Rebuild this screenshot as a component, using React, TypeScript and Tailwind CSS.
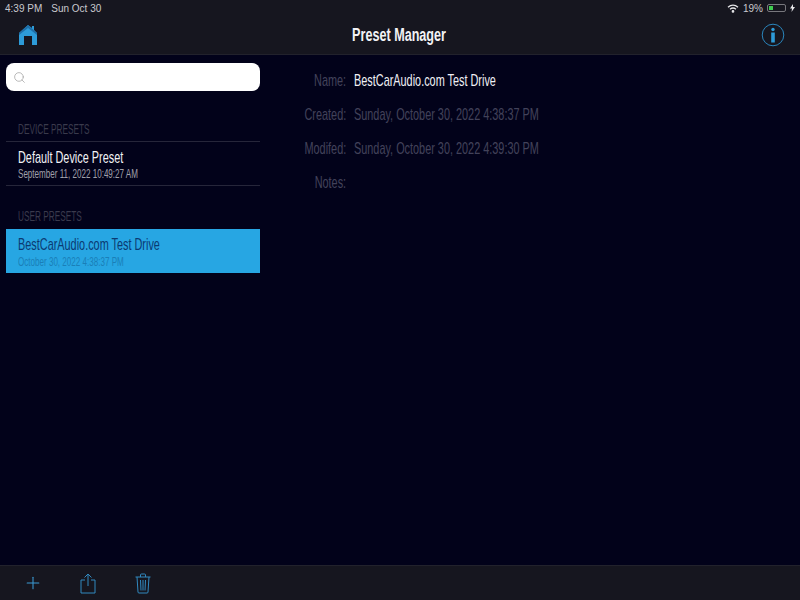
import React from 'react'
import { Search, Plus } from 'lucide-react'

const base = "font-['Liberation_Sans',sans-serif] inline-block whitespace-nowrap origin-left"
const condensed = `${base} scale-x-[0.64]`
const condensedSmall = `${base} scale-x-[0.62]`
const sectionLabel = `${base} scale-x-[0.59] text-[14px] text-[#3a3a4c]`

const HomeIcon = () => (
  <svg width="20" height="22" viewBox="0 0 20 22">
    <path d="M10 1 L14 4 L14 2 L16 2 L16 6 L19 9 L19 21 L14 21 L14 12 L6 12 L6 21 L1 21 L1 9 Z" fill="#2d9bd8" />
    <path d="M10 1 L1 9 L1 11 L10 4 L19 11 L19 9 Z" fill="#1f6fa8" />
  </svg>
)

const InfoIcon = () => (
  <svg width="24" height="24" viewBox="0 0 24 24" fill="none">
    <circle cx="12" cy="12" r="10.8" stroke="#2a86bd" strokeWidth="1" />
    <circle cx="12" cy="6.5" r="1.7" fill="#2d9bd8" />
    <rect x="10.2" y="9.5" width="3.6" height="10" fill="#2d9bd8" />
  </svg>
)

const ShareIcon = () => (
  <svg width="16" height="21" viewBox="0 0 16 21" fill="none" stroke="#3089c0" strokeWidth="1">
    <path d="M5 7 H1 V20 H15 V7 H11" />
    <path d="M8 13 V1 M4.5 4.5 L8 1 L11.5 4.5" />
  </svg>
)

const TrashIcon = () => (
  <svg width="16" height="21" viewBox="0 0 16 21" fill="none" stroke="#3089c0" strokeWidth="1">
    <path d="M0.5 4 H15.5 M5.5 4 V2 Q5.5 1 6.5 1 H9.5 Q10.5 1 10.5 2 V4" />
    <path d="M2 4 L3 19 Q3 20 4 20 H12 Q13 20 13 19 L14 4" />
    <path d="M5.5 7 L6 17.5 M8 7 V17.5 M10.5 7 L10 17.5" />
  </svg>
)

const DetailRow = ({ label, value, bright }: { label: string; value: string; bright?: boolean }) => (
  <div className="flex h-[34px] items-center">
    <div className="w-[66px] text-right">
      <span className={`${condensed} origin-right text-[17px] text-[#42425a]`}>{label}</span>
    </div>
    <div className="ml-2">
      <span className={`${condensed} text-[17px] ${bright ? 'text-[#f0f0f5]' : 'text-[#42425a]'}`}>{value}</span>
    </div>
  </div>
)

export default function App() {
  return (
    <div className="flex h-[600px] w-[800px] flex-col overflow-hidden bg-[#02021a] font-['Liberation_Sans',sans-serif]">
      {/* Status bar + nav */}
      <div className="h-[55px] shrink-0 border-b border-[#22222c] bg-[#16161f]">
        <div className="flex h-[16px] items-center justify-between pl-[5px] pr-[5px] text-[10px] text-[#c9c9ce]">
          <div className="flex gap-[9px]">
            <span>4:39 PM</span>
            <span>Sun Oct 30</span>
          </div>
          <div className="flex items-center gap-[4px]">
            <svg width="12" height="9" viewBox="0 0 12 9" fill="none" stroke="#e5e5e8" strokeWidth="1.3">
              <path d="M1 3.2 C4 .5 8 .5 11 3.2" />
              <path d="M3 5.2 C5 3.6 7 3.6 9 5.2" />
              <circle cx="6" cy="7.4" r="0.7" fill="#e5e5e8" />
            </svg>
            <span>19%</span>
            <div className="flex h-[8px] w-[19px] items-stretch rounded-[2px] border border-[#77777d] p-[1px]">
              <div className="w-[4px] bg-[#3ecb4f]" />
            </div>
            <svg width="5" height="8" viewBox="0 0 5 8">
              <path d="M3 0 L0 4.5 H2 L1.5 8 L5 3 H3 Z" fill="#e5e5e8" />
            </svg>
          </div>
        </div>
        <div className="flex h-[38px] items-center justify-between pl-[18px] pr-[15px]">
          <HomeIcon />
          <span className="inline-block origin-center scale-x-[0.7] whitespace-nowrap text-[18px] font-bold text-[#f2f2f5]">
            Preset Manager
          </span>
          <InfoIcon />
        </div>
      </div>

      {/* Body */}
      <div className="flex min-h-0 flex-1">
        <div className="w-[266px] shrink-0 pl-[6px] pr-[6px] pt-2">
          <div className="flex h-[28px] items-center rounded-lg bg-white pl-[7px]">
            <Search size={13} strokeWidth={1.25} className="text-[#9a9a9a]" />
          </div>
          <div className="flex h-[50px] items-end pb-[1px] pl-3">
            <span className={sectionLabel}>DEVICE PRESETS</span>
          </div>
          <div className="flex h-[45px] flex-col justify-center border-y border-[#26263a] pl-3 pt-[2px]">
            <span className={`${condensed} text-[17px] leading-[18px] text-[#f2f2f5]`}>Default Device Preset</span>
            <span className={`${condensedSmall} text-[13px] leading-[14px] text-[#a0a0aa]`}>September 11, 2022 10:49:27 AM</span>
          </div>
          <div className="flex h-[43px] items-end pb-[2px] pl-3">
            <span className={sectionLabel}>USER PRESETS</span>
          </div>
          <div className="flex h-[44px] flex-col justify-center bg-[#27a6e3] pl-3 pt-[2px]">
            <span className={`${condensed} text-[17px] leading-[18px] text-[#0b3a72]`}>BestCarAudio.com Test Drive</span>
            <span className={`${condensedSmall} mt-[1px] text-[13px] leading-[14px] text-[#1a7fb8]`}>October 30, 2022 4:38:37 PM</span>
          </div>
        </div>
        <div className="flex-1 pl-[14px] pt-[9px]">
          <DetailRow label="Name:" value="BestCarAudio.com Test Drive" bright />
          <DetailRow label="Created:" value="Sunday, October 30, 2022 4:38:37 PM" />
          <DetailRow label="Modifed:" value="Sunday, October 30, 2022 4:39:30 PM" />
          <DetailRow label="Notes:" value="" />
        </div>
      </div>

      {/* Bottom toolbar */}
      <div className="flex h-[35px] shrink-0 items-center border-t border-[#22222c] bg-[#16161f] pl-[23px]">
        <Plus size={20} strokeWidth={1.25} className="text-[#3a9ad4]" />
        <div className="ml-[37px]">
          <ShareIcon />
        </div>
        <div className="ml-[39px]">
          <TrashIcon />
        </div>
      </div>
    </div>
  )
}
